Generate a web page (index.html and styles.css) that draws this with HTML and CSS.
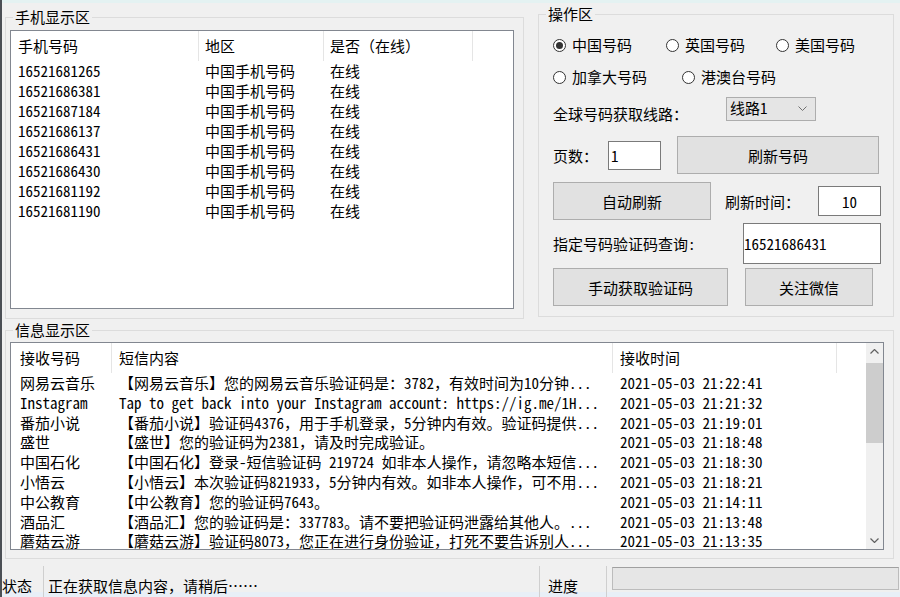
FILE: index.html
```html
<!DOCTYPE html>
<html lang="zh-CN">
<head>
    <meta charset="UTF-8">
    <title>手机号码接码工具</title>
    <link rel="stylesheet" href="styles.css">
</head>
<body>
    <div class="window">
        <div class="caption-edge"></div>

        <div class="top">
            <!-- 号码列表 -->
            <fieldset class="group phones">
                <legend>手机显示区</legend>
                <div class="listview phone-list">
                    <div class="lv-head">
                        <span class="p-num">手机号码</span>
                        <span class="p-area">地区</span>
                        <span class="p-state">是否（在线）</span>
                    </div>
                    <div class="lv-row"><span class="p-num">16521681265</span><span class="p-area">中国手机号码</span><span class="p-state">在线</span></div>
                    <div class="lv-row"><span class="p-num">16521686381</span><span class="p-area">中国手机号码</span><span class="p-state">在线</span></div>
                    <div class="lv-row"><span class="p-num">16521687184</span><span class="p-area">中国手机号码</span><span class="p-state">在线</span></div>
                    <div class="lv-row"><span class="p-num">16521686137</span><span class="p-area">中国手机号码</span><span class="p-state">在线</span></div>
                    <div class="lv-row"><span class="p-num">16521686431</span><span class="p-area">中国手机号码</span><span class="p-state">在线</span></div>
                    <div class="lv-row"><span class="p-num">16521686430</span><span class="p-area">中国手机号码</span><span class="p-state">在线</span></div>
                    <div class="lv-row"><span class="p-num">16521681192</span><span class="p-area">中国手机号码</span><span class="p-state">在线</span></div>
                    <div class="lv-row"><span class="p-num">16521681190</span><span class="p-area">中国手机号码</span><span class="p-state">在线</span></div>
                </div>
            </fieldset>

            <!-- 操作面板 -->
            <fieldset class="group ops">
                <legend>操作区</legend>
                <div class="ops-body">
                    <div class="ops-row radios">
                        <label class="radio w113"><span class="radio-dot checked"></span>中国号码</label>
                        <label class="radio w110"><span class="radio-dot"></span>英国号码</label>
                        <label class="radio"><span class="radio-dot"></span>美国号码</label>
                    </div>
                    <div class="ops-row radios second">
                        <label class="radio w129"><span class="radio-dot"></span>加拿大号码</label>
                        <label class="radio"><span class="radio-dot"></span>港澳台号码</label>
                    </div>
                    <div class="ops-row route">
                        <span class="route-label">全球号码获取线路：</span>
                        <div class="combo">
                            <span>线路1</span>
                            <svg width="9" height="5" viewBox="0 0 9 5"><polyline points="0.5,0.5 4.5,4.5 8.5,0.5" fill="none" stroke="#707070" stroke-width="1"/></svg>
                        </div>
                    </div>
                    <div class="ops-row page">
                        <span class="page-label">页数：</span>
                        <input class="textbox page-box" type="text" value="1">
                        <button class="btn refresh-btn">刷新号码</button>
                    </div>
                    <div class="ops-row auto">
                        <button class="btn auto-btn">自动刷新</button>
                        <span class="interval-label">刷新时间：</span>
                        <input class="textbox interval-box" type="text" value="10">
                    </div>
                    <div class="ops-row query">
                        <span class="query-label">指定号码验证码查询:</span>
                        <input class="textbox query-box" type="text" value="16521686431">
                    </div>
                    <div class="ops-row actions">
                        <button class="btn fetch-btn">手动获取验证码</button>
                        <button class="btn follow-btn">关注微信</button>
                    </div>
                </div>
            </fieldset>
        </div>

        <!-- 短信列表 -->
        <fieldset class="group messages">
            <legend>信息显示区</legend>
            <div class="listview msg-list">
                <div class="lv-main">
                    <div class="lv-head">
                        <span class="m-from">接收号码</span>
                        <span class="m-text">短信内容</span>
                        <span class="m-time">接收时间</span>
                    </div>
                    <div class="lv-row"><span class="m-from">网易云音乐</span><span class="m-text">【网易云音乐】您的网易云音乐验证码是：3782，有效时间为10分钟...</span><span class="m-time">2021-05-03 21:22:41</span></div>
                    <div class="lv-row"><span class="m-from">Instagram</span><span class="m-text">Tap to get back into your Instagram account: https://ig.me/1H...</span><span class="m-time">2021-05-03 21:21:32</span></div>
                    <div class="lv-row"><span class="m-from">番茄小说</span><span class="m-text">【番茄小说】验证码4376，用于手机登录，5分钟内有效。验证码提供...</span><span class="m-time">2021-05-03 21:19:01</span></div>
                    <div class="lv-row"><span class="m-from">盛世</span><span class="m-text">【盛世】您的验证码为2381，请及时完成验证。</span><span class="m-time">2021-05-03 21:18:48</span></div>
                    <div class="lv-row"><span class="m-from">中国石化</span><span class="m-text">【中国石化】登录-短信验证码 219724 如非本人操作，请忽略本短信...</span><span class="m-time">2021-05-03 21:18:30</span></div>
                    <div class="lv-row"><span class="m-from">小悟云</span><span class="m-text">【小悟云】本次验证码821933，5分钟内有效。如非本人操作，可不用...</span><span class="m-time">2021-05-03 21:18:21</span></div>
                    <div class="lv-row"><span class="m-from">中公教育</span><span class="m-text">【中公教育】您的验证码7643。</span><span class="m-time">2021-05-03 21:14:11</span></div>
                    <div class="lv-row"><span class="m-from">酒品汇</span><span class="m-text">【酒品汇】您的验证码是：337783。请不要把验证码泄露给其他人。...</span><span class="m-time">2021-05-03 21:13:48</span></div>
                    <div class="lv-row"><span class="m-from">蘑菇云游</span><span class="m-text">【蘑菇云游】验证码8073，您正在进行身份验证，打死不要告诉别人...</span><span class="m-time">2021-05-03 21:13:35</span></div>
                </div>
                <div class="scrollbar">
                    <div class="sb-btn">
                        <svg width="9" height="5" viewBox="0 0 9 5"><polyline points="0.5,4.5 4.5,0.5 8.5,4.5" fill="none" stroke="#606060" stroke-width="1.2"/></svg>
                    </div>
                    <div class="sb-track"><div class="sb-thumb"></div></div>
                    <div class="sb-btn">
                        <svg width="9" height="5" viewBox="0 0 9 5"><polyline points="0.5,0.5 4.5,4.5 8.5,0.5" fill="none" stroke="#606060" stroke-width="1.2"/></svg>
                    </div>
                </div>
            </div>
        </fieldset>

        <!-- 状态栏 -->
        <div class="statusbar">
            <div class="st-cell st-title">状态</div>
            <div class="st-cell st-msg">正在获取信息内容，请稍后……</div>
            <div class="st-cell st-progress-label">进度</div>
            <div class="progress"></div>
        </div>
    </div>
</body>
</html>
```

FILE: styles.css
```css
body {
    margin: 0;
    background: #f0f0f0;
    font-family: "Noto Sans Mono CJK SC", "Noto Sans CJK SC", "DejaVu Sans Mono", monospace;
    font-size: 15px;
    color: #000;
}

.window {
    width: 898px;
    height: 597px;
    border-left: 2px solid #4b4f55;
    background: #f0f0f0;
    display: flex;
    flex-direction: column;
    overflow: hidden;
}

.caption-edge {
    height: 3px;
    flex: none;
    background: #e4f2f2;
}

.top {
    display: flex;
    align-items: flex-start;
    flex: none;
}

/* group boxes */
.group {
    margin: 0;
    min-width: 0;
    border: 1px solid #dcdcdc;
    box-sizing: border-box;
    padding: 0 9px 9px 4px;
}

.group legend {
    margin-left: 3px;
    padding: 0 2px;
    height: 18px;
    line-height: 18px;
}

.phones {
    width: 519px;
    margin: 5px 0 0 3px;
    padding-top: 4px;
}

.ops {
    width: 356px;
    margin: 2px 0 0 14px;
    padding-bottom: 10px;
}

.messages {
    width: 889px;
    margin: 2px 0 0 3px;
    padding-top: 3px;
    padding-bottom: 8px;
    flex: none;
}

/* list views */
.listview {
    background: #fff;
    border: 1px solid #828790;
    box-sizing: border-box;
    overflow: hidden;
}

.phone-list {
    width: 504px;
    height: 279px;
}

.lv-head {
    display: flex;
    height: 30px;
}

.lv-head span {
    height: 30px;
    line-height: 30px;
    border-right: 1px solid #e5e5e5;
    box-sizing: border-box;
}

.lv-row {
    display: flex;
    height: 20px;
    line-height: 20px;
    white-space: nowrap;
}

.lv-row span {
    overflow: hidden;
    box-sizing: border-box;
}

.p-num { width: 188px; padding-left: 7px; flex: none; }
.p-area { width: 125px; padding-left: 6px; flex: none; }
.p-state { width: 149px; padding-left: 6px; flex: none; }

.msg-list {
    width: 874px;
    height: 208px;
    display: flex;
}

.lv-main {
    flex: 1;
    overflow: hidden;
}

.lv-main .lv-row {
    height: 19.8px;
    line-height: 19.8px;
}

.m-from { width: 101px; padding-left: 9px; flex: none; }
.m-text { width: 501px; padding-left: 7px; flex: none; }
.m-time { width: 224px; padding-left: 7px; flex: none; }

.scrollbar {
    width: 17px;
    flex: none;
    background: #f0f0f0;
    display: flex;
    flex-direction: column;
}

.sb-btn {
    height: 17px;
    display: flex;
    align-items: center;
    justify-content: center;
}

.sb-track {
    flex: 1;
}

.sb-thumb {
    margin-top: 3px;
    height: 80px;
    background: #cdcdcd;
}

/* operation panel */
.ops-body {
    padding-left: 10px;
}

.ops-row {
    display: flex;
    align-items: center;
}

.radios {
    height: 20px;
    margin-top: 12px;
}

.radio {
    display: flex;
    align-items: center;
    gap: 6px;
    line-height: 20px;
}

.w113 { width: 113px; }
.w110 { width: 110px; }
.w129 { width: 129px; }

.radio-dot {
    width: 13px;
    height: 13px;
    border: 1px solid #333;
    border-radius: 50%;
    background: #fff;
    box-sizing: border-box;
    display: flex;
    align-items: center;
    justify-content: center;
}

.radio-dot.checked::after {
    content: '';
    width: 7px;
    height: 7px;
    border-radius: 50%;
    background: #333;
}

.route {
    margin-top: 10px;
    height: 24px;
}

.route-label {
    width: 173px;
    margin-top: 8px;
}

.combo {
    width: 90px;
    height: 24px;
    background: #e5e5e5;
    border: 1px solid #adadad;
    box-sizing: border-box;
    display: flex;
    align-items: center;
    justify-content: space-between;
    padding: 0 8px 2px 3px;
    line-height: 20px;
}

.textbox {
    font: inherit;
    color: #000;
    background: #fff;
    border: 1px solid #7a7a7a;
    border-radius: 0;
    box-sizing: border-box;
    outline: none;
    margin: 0;
}

.btn {
    font: inherit;
    color: #000;
    background: #e1e1e1;
    border: 1px solid #adadad;
    border-radius: 0;
    box-sizing: border-box;
    padding: 0;
    margin: 0;
}

.page {
    margin-top: 15px;
    height: 38px;
}

.page-label {
    width: 55px;
}

.page-box {
    width: 53px;
    height: 29px;
    padding: 0 2px;
}

.refresh-btn {
    width: 202px;
    height: 38px;
    margin-left: 16px;
}

.auto {
    margin-top: 8px;
    height: 38px;
}

.auto-btn {
    width: 158px;
    height: 38px;
}

.interval-label {
    width: 93px;
    margin-left: 14px;
}

.interval-box {
    width: 63px;
    height: 30px;
    text-align: center;
    padding: 0;
}

.query {
    margin-top: 3px;
    height: 41px;
}

.query-label {
    width: 190px;
}

.query-box {
    width: 138px;
    height: 41px;
    padding: 0;
}

.actions {
    margin-top: 4px;
    height: 38px;
    gap: 17px;
}

.fetch-btn {
    width: 175px;
    height: 38px;
}

.follow-btn {
    width: 128px;
    height: 38px;
}

/* status bar */
.statusbar {
    display: flex;
    height: 31px;
    margin-top: 7px;
    flex: none;
    background: linear-gradient(to bottom, #f0f0f0 26px, #e8eff7 26px);
}

.st-cell {
    display: flex;
    align-items: flex-end;
    padding-bottom: 1px;
    line-height: 20px;
    border-right: 1px solid #cfcfcf;
    box-sizing: border-box;
    white-space: nowrap;
}

.st-title { width: 42px; }
.st-msg { width: 496px; padding-left: 4px; }
.st-progress-label { width: 67px; padding-left: 8px; }

.progress {
    width: 287px;
    height: 23px;
    margin: 1px 0 0 5px;
    border: 1px solid #bcbcbc;
    border-top-color: #a0a0a0;
    background: #e6e6e6;
    box-sizing: border-box;
}
```
